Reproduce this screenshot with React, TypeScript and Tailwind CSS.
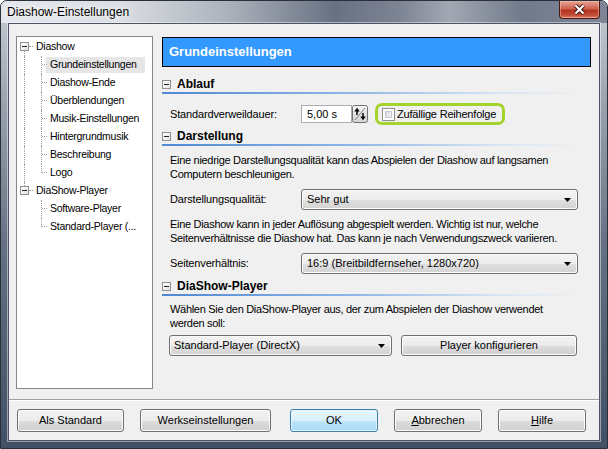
import type { ReactNode } from "react";

type TreeNode = {
  label: string;
  root?: boolean;
  first?: boolean;
  last?: boolean;
  inLastRoot?: boolean;
  selected?: boolean;
};

const TREE: TreeNode[] = [
  { label: "Diashow", root: true, first: true },
  { label: "Grundeinstellungen", selected: true },
  { label: "Diashow-Ende" },
  { label: "Überblendungen" },
  { label: "Musik-Einstellungen" },
  { label: "Hintergrundmusik" },
  { label: "Beschreibung" },
  { label: "Logo", last: true },
  { label: "DiaShow-Player", root: true, last: true },
  { label: "Software-Player", inLastRoot: true },
  { label: "Standard-Player (...", inLastRoot: true, last: true },
];

const VLINE = "absolute w-0 border-l border-dotted border-[#a0a0a0]";
const HLINE = "absolute h-0 border-t border-dotted border-[#a0a0a0]";

function MinusBox() {
  return (
    <span className="flex h-[9px] w-[9px] items-center justify-center border border-[#919191] bg-[linear-gradient(135deg,#ffffff_0%,#e2e2e2_100%)]">
      <span className="h-px w-[5px] bg-[#1e1e1e]" />
    </span>
  );
}

function TreeRow({ node }: { node: TreeNode }) {
  if (node.root) {
    return (
      <div className="relative flex h-[18px] items-center">
        {!node.first && <span className={`${VLINE} left-[7px] top-0 h-[4px]`} />}
        {!node.last && <span className={`${VLINE} left-[7px] top-[13px] bottom-0`} />}
        <span className={`${HLINE} left-[12px] top-[8px] w-[4px]`} />
        <span className="absolute left-[3px] top-[4px]">
          <MinusBox />
        </span>
        <span className="ml-[19px] whitespace-nowrap">{node.label}</span>
      </div>
    );
  }
  return (
    <div className="relative flex h-[18px] items-center">
      {!node.inLastRoot && <span className={`${VLINE} left-[7px] top-0 h-[18px]`} />}
      <span className={`${VLINE} left-[24px] top-0 ${node.last ? "h-[9px]" : "h-[18px]"}`} />
      <span className={`${HLINE} left-[25px] top-[8px] w-[5px]`} />
      <span
        className={`ml-[29px] flex h-[16px] items-center whitespace-nowrap pl-[4px] ${
          node.selected ? "w-[99px] bg-[#e6e6e6]" : ""
        }`}
      >
        {node.label}
      </span>
    </div>
  );
}

function SectionHead({ title, className }: { title: string; className: string }) {
  return (
    <div className={className}>
      <div className="flex h-[16px] items-center">
        <MinusBox />
        <span className="ml-[6px] text-[12px] font-bold">{title}</span>
      </div>
      <div className="h-[2px] w-[424px] bg-[linear-gradient(90deg,#5088d2_0%,#8fb6e6_45%,#d9e6f4_80%,rgba(240,240,240,0)_100%)]" />
    </div>
  );
}

function Combo({ className, children }: { className: string; children: ReactNode }) {
  return (
    <div
      className={`flex h-[21px] items-center justify-between rounded-[3px] border border-[#707070] bg-[linear-gradient(180deg,#f3f3f3_0%,#ececec_50%,#e0e0e0_51%,#d3d3d3_100%)] shadow-[inset_0_0_0_1px_#fafafa] ${className}`}
    >
      <span className="whitespace-nowrap">{children}</span>
      <svg width="7" height="4" viewBox="0 0 7 4" className="mr-[6px]">
        <path d="M0 0 H7 L3.5 4 Z" fill="#000" />
      </svg>
    </div>
  );
}

function Btn({
  className,
  primary,
  children,
}: {
  className: string;
  primary?: boolean;
  children: ReactNode;
}) {
  return (
    <div
      className={`flex items-center justify-center rounded-[3px] border ${
        primary
          ? "border-[#3c7fb1] bg-[linear-gradient(180deg,#eaf6fd_0%,#d9f0fc_50%,#bee6fd_51%,#a7d9f5_100%)] shadow-[inset_0_0_0_1px_#e6f4fc]"
          : "border-[#707070] bg-[linear-gradient(180deg,#f3f3f3_0%,#ebebeb_50%,#dddddd_51%,#cfcfcf_100%)] shadow-[inset_0_0_0_1px_#fcfcfc]"
      } ${className}`}
    >
      {children}
    </div>
  );
}

function Spin() {
  return (
    <svg width="16" height="18" viewBox="0 0 16 18">
      <defs>
        <linearGradient id="spinbg" x1="0" y1="0" x2="0" y2="1">
          <stop offset="0" stopColor="#f6f6f6" />
          <stop offset="1" stopColor="#d2d2d2" />
        </linearGradient>
      </defs>
      <rect x="0.5" y="0.5" width="15" height="17" rx="2" fill="url(#spinbg)" stroke="#707070" />
      <path d="M3 15 L13 3" stroke="#7a7a7a" />
      <path d="M5 5 V10" stroke="#000" strokeWidth="1.5" />
      <path d="M2.3 6.5 L5 2.8 L7.7 6.5 Z" fill="#000" />
      <path d="M11 8 V13" stroke="#000" strokeWidth="1.5" />
      <path d="M8.3 11.5 L11 15.2 L13.7 11.5 Z" fill="#000" />
    </svg>
  );
}

function Checkbox() {
  return (
    <span className="block h-[13px] w-[13px] border border-[#8e8f8f] bg-white p-[2px]">
      <span className="block h-full w-full border border-[#c4c7cc] bg-[linear-gradient(135deg,#d4d7db_0%,#f7f7f7_100%)]" />
    </span>
  );
}

export default function App() {
  return (
    <div className="h-[449px] w-[608px] overflow-hidden bg-white font-['Liberation_Sans',Arial,sans-serif] text-[11px] text-black">
      <div className="relative flex h-full flex-col rounded-t-[7px] border border-[#29303a] bg-[linear-gradient(180deg,#c9ced5_0%,#9ca4b0_22%,#647083_55%,#425065_100%)]">
        {/* caption */}
        <div className="flex h-[22px] items-center rounded-t-[6px] bg-[linear-gradient(90deg,#e4e7eb_0%,#dadde2_20%,#aab0ba_38%,#687183_55%,#7d8494_66%,#a2a8b3_74%,#717a8b_86%,#7f8698_100%)] pl-[6px]">
          <span className="text-[12px] [text-shadow:0_0_6px_#ffffff,0_0_10px_#ffffff]">
            Diashow-Einstellungen
          </span>
        </div>
        <div className="absolute right-[7px] top-0 flex h-[18px] w-[41px] items-center justify-center rounded-b-[4px] border border-t-0 border-[#4a1a12] bg-[linear-gradient(180deg,#e6a596_0%,#cf6150_45%,#b3321e_55%,#c4513b_85%,#df8468_100%)] shadow-[inset_0_0_0_1px_rgba(255,205,195,0.45)]">
          <svg width="13" height="11" viewBox="0 0 13 11">
            <path d="M2.5 1.5 L10.5 9.5 M10.5 1.5 L2.5 9.5" stroke="#3b1008" strokeWidth="4" />
            <path d="M2.5 1.5 L10.5 9.5 M10.5 1.5 L2.5 9.5" stroke="#ffffff" strokeWidth="2.2" />
          </svg>
        </div>

        {/* client area */}
        <div className="mx-[7px] mb-[7px] flex flex-1 flex-col border border-[#4b5462] bg-[#f0f0f0] shadow-[0_0_0_1px_rgba(255,255,255,0.45)]">
          <div className="flex pl-[7px] pt-[12px]">
            <div className="h-[353px] w-[137px] border border-[#828790] bg-white pt-[1px] text-[10.5px] tracking-[-0.25px]">
              {TREE.map((node) => (
                <TreeRow key={node.label} node={node} />
              ))}
            </div>

            <div className="ml-[9px] mt-[1px] w-[429px]">
              <div className="flex h-[30px] items-center border border-black bg-[#3399ff] pl-[6px] text-[13px] font-bold text-white">
                Grundeinstellungen
              </div>

              <SectionHead title="Ablauf" className="mt-[9px]" />
              <div className="mt-[9px] flex h-[22px] items-center pl-[8px]">
                <span className="w-[131px] tracking-[-0.15px]">Standardverweildauer:</span>
                <div className="flex h-[18px] w-[51px] items-center border border-[#abadb3] bg-white pl-[5px]">
                  5,00 s
                </div>
                <Spin />
                <div className="ml-[7px] flex h-[22px] w-[130px] items-center rounded-[7px] border-[3px] border-[#a4d42c] pl-[4px]">
                  <Checkbox />
                  <span className="ml-[2px] whitespace-nowrap tracking-[-0.2px]">Zufällige Reihenfolge</span>
                </div>
              </div>

              <SectionHead title="Darstellung" className="mt-[3px]" />
              <p className="mt-[7px] whitespace-nowrap pl-[8px] leading-[14px] tracking-[-0.3px]">
                Eine niedrige Darstellungsqualität kann das Abspielen der Diashow auf langsamen
                <br />
                Computern beschleunigen.
              </p>
              <div className="mt-[8px] flex h-[21px] items-center pl-[8px]">
                <span className="w-[131px] tracking-[-0.15px]">Darstellungsqualität:</span>
                <Combo className="w-[277px] pl-[5px]">Sehr gut</Combo>
              </div>
              <p className="mt-[7px] whitespace-nowrap pl-[8px] leading-[14px] tracking-[-0.3px]">
                Eine Diashow kann in jeder Auflösung abgespielt werden. Wichtig ist nur, welche
                <br />
                Seitenverhältnisse die Diashow hat. Das kann je nach Verwendungszweck variieren.
              </p>
              <div className="mt-[8px] flex h-[21px] items-center pl-[8px]">
                <span className="w-[131px] tracking-[-0.15px]">Seitenverhältnis:</span>
                <Combo className="w-[277px] pl-[5px]">16:9 (Breitbildfernseher, 1280x720)</Combo>
              </div>

              <SectionHead title="DiaShow-Player" className="mt-[4px]" />
              <p className="mt-[6px] whitespace-nowrap pl-[8px] leading-[14px] tracking-[-0.3px]">
                Wählen Sie den DiaShow-Player aus, der zum Abspielen der Diashow verwendet
                <br />
                werden soll:
              </p>
              <div className="mt-[5px] flex h-[21px] items-center pl-[7px]">
                <Combo className="w-[223px] pl-[4px]">Standard-Player (DirectX)</Combo>
                <Btn className="ml-[9px] h-[21px] w-[176px]">Player konfigurieren</Btn>
              </div>
            </div>
          </div>

          {/* etched separator */}
          <div className="mt-[10px] h-[2px] border-t border-b border-t-[#a0a0a0] border-b-white" />

          <div className="mt-[8px] flex pl-[8px]">
            <Btn className="h-[23px] w-[107px]">Als Standard</Btn>
            <Btn className="ml-[16px] h-[23px] w-[131px]">Werkseinstellungen</Btn>
            <Btn primary className="ml-[19px] h-[23px] w-[88px]">
              OK
            </Btn>
            <Btn className="ml-[16px] h-[23px] w-[88px]">
              <span>
                <span className="underline">A</span>bbrechen
              </span>
            </Btn>
            <Btn className="ml-[16px] h-[23px] w-[88px]">
              <span>
                <span className="underline">H</span>ilfe
              </span>
            </Btn>
          </div>
        </div>
      </div>
    </div>
  );
}
